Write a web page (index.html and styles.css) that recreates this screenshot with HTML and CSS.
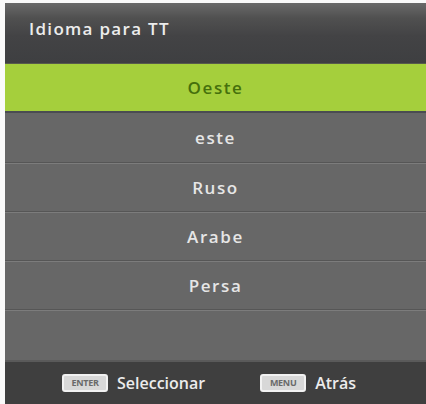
FILE: index.html
```html
<!DOCTYPE html>
<html lang="es">

<head>
    <meta charset="utf-8">
    <title>Idioma para TT</title>
    <link rel="stylesheet" href="styles.css">
</head>

<body>
    <div class="pantalla">
        <header class="titulo">Idioma para TT</header>

        <ul class="lista">
            <li class="opcion activa">Oeste</li>
            <li class="opcion">este</li>
            <li class="opcion">Ruso</li>
            <li class="opcion">Arabe</li>
            <li class="opcion">Persa</li>
            <li class="opcion vacia"></li>
        </ul>

        <footer class="ayuda">
            <span class="tecla">ENTER</span>
            <span class="accion">Seleccionar</span>
            <span class="tecla">MENU</span>
            <span class="accion">Atrás</span>
        </footer>
    </div>
</body>

</html>
```

FILE: styles.css
```css
body {
    margin: 0;
    background-color: #fafafa;
    font-family: "Open Sans", sans-serif;
    font-weight: 600;
}

.pantalla {
    margin: 3px 0 0 5px;
    height: 401px;
    display: flex;
    flex-direction: column;
    background-color: #666;
}

.titulo {
    height: 61px;
    padding-left: 24px;
    padding-bottom: 10px;
    display: flex;
    align-items: center;
    box-sizing: border-box;
    color: #ececec;
    font-size: 17px;
    letter-spacing: 1.3px;
    background: linear-gradient(#6a6a6a 0%, #505050 25%, #434345 55%, #3e3f41 100%);
    border-bottom: 1px solid #575b4c;
}

.lista {
    list-style: none;
    margin: 0;
    padding: 0;
    flex: 1;
    display: flex;
    flex-direction: column;
}

.opcion {
    height: 49px;
    display: flex;
    align-items: center;
    justify-content: center;
    color: #e6e6e6;
    font-size: 17px;
    letter-spacing: 1.6px;
    background-color: #676767;
    border-top: 1px solid #565656;
    box-shadow: inset 0 1px 0 #7c7c7c;
    box-sizing: border-box;
}

.opcion.activa {
    background-color: #a5cf3c;
    color: #45700c;
    border-top: none;
    box-shadow: none;
    border-bottom: 2px solid #4a4c52;
}

.opcion.activa + .opcion {
    border-top: none;
    box-shadow: none;
}

.opcion.vacia {
    flex: 1;
    border-bottom: 2px solid #5a5a5a;
}

.ayuda {
    height: 42px;
    display: flex;
    align-items: center;
    padding-left: 57px;
    background-color: #3f3f3f;
    color: #ececec;
    font-size: 16px;
    gap: 9px;
}

.tecla {
    width: 42px;
    height: 14px;
    line-height: 14px;
    text-align: center;
    font-size: 9px;
    font-weight: 700;
    color: #6a6a6a;
    background-color: #d8d8d8;
    border: 2px solid #f2f2f2;
    border-radius: 3px;
    letter-spacing: -0.3px;
}

.accion {
    margin-right: 46px;
}
```
